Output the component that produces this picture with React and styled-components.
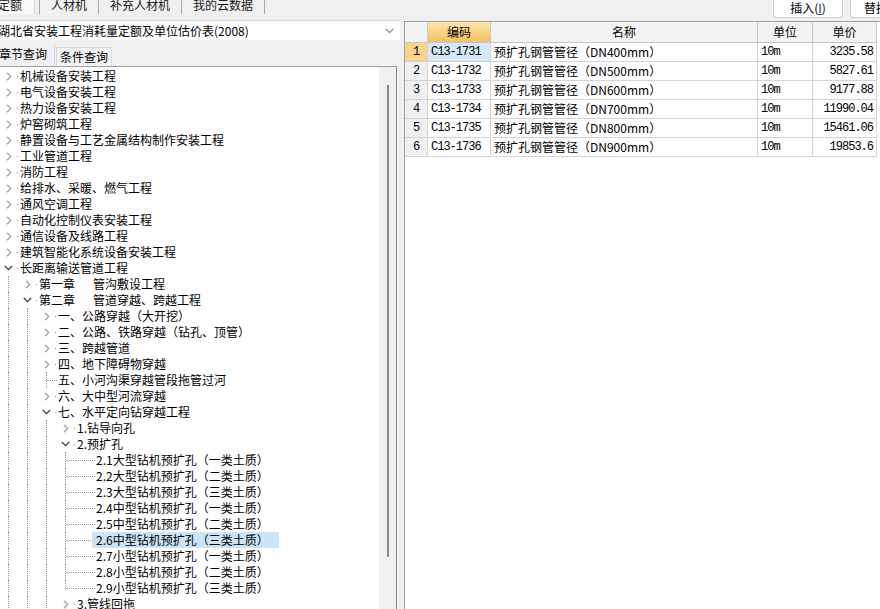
import React from 'react'
import styled, { createGlobalStyle } from 'styled-components'

const GlobalStyle = createGlobalStyle`
  html, body { margin: 0; padding: 0; background: #f0f0f0; overflow: hidden; }
  body {
    font-family: "Noto Sans CJK SC", "Liberation Sans", sans-serif;
    font-size: 12px;
    color: #000;
  }
`

const Page = styled.div`
  display: flex;
  width: 880px;
  height: 609px;
  overflow: hidden;
  background: #f0f0f0;
`

// ---------- left side ----------
const LeftPanel = styled.div`
  width: 403px;
  margin-left: -3px;
  flex-shrink: 0;
  display: flex;
  flex-direction: column;
  min-height: 0;
`

const TopTabs = styled.div`
  display: flex;
  height: 17px;
  margin-top: -3px;
  flex-shrink: 0;
`

const TopTab = styled.div`
  height: 17px;
  line-height: 16px;
  white-space: nowrap;
  padding: ${p => (p.$active ? '0 12px 0 1px' : '0 10px 0 11px')};
  background: ${p => (p.$active ? '#fafafa' : 'transparent')};
  border-right: 1px solid ${p => (p.$active ? '#d2d2d2' : 'transparent')};
  color: #1a1a1a;
`

const Sep = styled.div`
  width: 1px;
  height: 17px;
  background: #a8a8a8;
  margin-left: ${p => p.$gap || 0}px;
`

const Combo = styled.div`
  margin-top: 6px;
  height: 19px;
  border-top: 1px solid #dadada;
  background: #fff;
  display: flex;
  align-items: center;
  flex-shrink: 0;
`

const ComboText = styled.span`
  padding-left: 1px;
  line-height: 19px;
  white-space: nowrap;
`

const ComboArrow = styled.span`
  margin-left: auto;
  margin-right: 6px;
  display: flex;
`

const QueryTabs = styled.div`
  height: 26px;
  display: flex;
  align-items: flex-end;
  flex-shrink: 0;
`

const QueryTab = styled.div`
  box-sizing: border-box;
  height: ${p => (p.$active ? 23 : 19)}px;
  line-height: ${p => (p.$active ? 20 : 18)}px;
  padding: ${p => (p.$active ? '0 7px 0 1px' : '0 3px')};
  margin-left: ${p => (p.$active ? 0 : 1)}px;
  border: 1px solid ${p => (p.$active ? 'transparent' : '#d8d8d8')};
  border-right-color: #d8d8d8;
  border-bottom: none;
  background: ${p => (p.$active ? '#f0f0f0' : '#f3f3f3')};
  white-space: nowrap;
`

const TreeFrame = styled.div`
  flex: 1;
  min-height: 0;
  margin-right: 3px;
  display: flex;
  border-top: 1px solid #a0a0a0;
  border-right: 1px solid #828790;
  box-shadow: inset 0 1px 0 #c8c8c8;
  background: #fff;
`

const TreeBody = styled.div`
  flex: 1;
  min-width: 0;
  overflow: hidden;
  padding: 1px 0 0 3px;
  background: #fff;
`

const Scrollbar = styled.div`
  width: 17px;
  flex-shrink: 0;
  background: #f0f0f0;
  display: flex;
  justify-content: center;
  padding-top: 18px;
`

const Thumb = styled.div`
  width: 2px;
  height: 472px;
  background: #8a8a8a;
`

const Row = styled.div`
  display: flex;
  height: 16px;
  line-height: 16px;
  white-space: nowrap;
`

const Indent = styled.span`
  width: 19px;
  flex-shrink: 0;
  display: flex;
`

const Guide = styled.span`
  margin-left: 8px;
  width: 0;
  height: ${p => (p.$half ? '8px' : '100%')};
  border-left: 1px dotted #999;
  align-self: flex-start;
  flex-shrink: 0;
`

const HLine = styled.span`
  flex: 1;
  height: 0;
  align-self: center;
  border-top: 1px dotted #999;
  margin-right: ${p => p.$gap || 0}px;
`

const Toggle = styled.span`
  width: 20px;
  flex-shrink: 0;
  display: flex;
  align-items: center;
`

const ArrowBox = styled.span`
  width: 17px;
  display: flex;
  justify-content: center;
  align-items: center;
`

const Dot = styled.span`
  width: 1px;
  height: 1px;
  background: #9a9a9a;
`

const Label = styled.span`
  padding: ${p => (p.$sel ? '0 10px 0 4px' : '0')};
  margin-left: ${p => (p.$sel ? -4 : 0)}px;
  background: ${p => (p.$sel ? '#cce4f7' : 'transparent')};
`

const RightArrow = () => (
  <svg width="6" height="9" viewBox="0 0 6 9">
    <path d="M1 0.8 L4.6 4.5 L1 8.2" fill="none" stroke="#a2a2a2" strokeWidth="1.3" />
  </svg>
)

const DownArrow = () => (
  <svg width="9" height="6" viewBox="0 0 9 6">
    <path d="M0.8 1 L4.5 4.6 L8.2 1" fill="none" stroke="#3c3c3c" strokeWidth="1.3" />
  </svg>
)

// ---------- right side ----------
const Splitter = styled.div`
  width: 4px;
  flex-shrink: 0;
`

const RightPanel = styled.div`
  flex: 1;
  min-width: 0;
  display: flex;
  flex-direction: column;
  overflow: hidden;
`

const ActionBar = styled.div`
  height: 21px;
  flex-shrink: 0;
  display: flex;
  justify-content: flex-end;
  align-items: flex-start;
  margin-right: -35px;
  gap: 7px;
`

const ActionButton = styled.div`
  box-sizing: border-box;
  width: ${p => p.$w}px;
  height: 19px;
  margin-top: -1px;
  line-height: 18px;
  padding-left: ${p => p.$pl || 0}px;
  text-align: ${p => (p.$pl ? 'left' : 'center')};
  background: #fdfdfd;
  border: 1px solid #d0d0d0;
  border-top: none;
  border-radius: 0 0 4px 4px;
  white-space: nowrap;
  u { color: #1e2f70; }
`

const Grid = styled.div`
  flex: 1;
  background: #fff;
  border-top: 1px solid #a0a0a0;
  border-left: 1px solid #a0a0a0;
`

const GridRow = styled.div`
  display: flex;
  height: ${p => (p.$head ? 21 : 19)}px;
  line-height: ${p => (p.$head ? 20 : 18)}px;
`

const Cell = styled.div`
  width: ${p => p.$w}px;
  flex-shrink: 0;
  box-sizing: border-box;
  padding: 0 3px;
  white-space: nowrap;
  overflow: hidden;
  border-right: 1px solid ${p => (p.$head ? '#c9c9c9' : '#d4d4d4')};
  border-bottom: 1px solid ${p => (p.$head ? '#c4c4c4' : '#d4d4d4')};
  text-align: ${p => p.$align || 'left'};
  background: ${p => p.$bg || '#fff'};
  font-family: ${p => (p.$mono ? '"Liberation Mono", "Noto Sans CJK SC", monospace' : '"Noto Sans CJK SC", sans-serif')};
  letter-spacing: ${p => (p.$mono ? '-1px' : '0')};
`

const cols = [23, 63, 267, 55, 64]

const tree = [
  ...[
    '机械设备安装工程',
    '电气设备安装工程',
    '热力设备安装工程',
    '炉窖砌筑工程',
    '静置设备与工艺金属结构制作安装工程',
    '工业管道工程',
    '消防工程',
    '给排水、采暖、燃气工程',
    '通风空调工程',
    '自动化控制仪表安装工程',
    '通信设备及线路工程',
    '建筑智能化系统设备安装工程',
  ].map(t => ({ t, lv: 0, st: 'c', g: 0 })),
  { t: '长距离输送管道工程', lv: 0, st: 'e', g: 0 },
  { t: '第一章\u3000\u2002管沟敷设工程', lv: 1, st: 'c', g: 1 },
  { t: '第二章\u3000\u2002管道穿越、跨越工程', lv: 1, st: 'e', g: 1 },
  { t: '一、公路穿越（大开挖）', lv: 2, st: 'c', g: 2 },
  { t: '二、公路、铁路穿越（钻孔、顶管）', lv: 2, st: 'c', g: 2 },
  { t: '三、跨越管道', lv: 2, st: 'c', g: 2 },
  { t: '四、地下障碍物穿越', lv: 2, st: 'c', g: 2 },
  { t: '五、小河沟渠穿越管段拖管过河', lv: 2, st: 'leaf', g: 2 },
  { t: '六、大中型河流穿越', lv: 2, st: 'c', g: 2 },
  { t: '七、水平定向钻穿越工程', lv: 2, st: 'e', g: 2 },
  { t: '1.钻导向孔', lv: 3, st: 'c', g: 3 },
  { t: '2.预扩孔', lv: 3, st: 'e', g: 3 },
  ...[
    '2.1大型钻机预扩孔（一类土质）',
    '2.2大型钻机预扩孔（二类土质）',
    '2.3大型钻机预扩孔（三类土质）',
    '2.4中型钻机预扩孔（一类土质）',
    '2.5中型钻机预扩孔（二类土质）',
    '2.6中型钻机预扩孔（三类土质）',
    '2.7小型钻机预扩孔（一类土质）',
    '2.8小型钻机预扩孔（二类土质）',
    '2.9小型钻机预扩孔（三类土质）',
  ].map((t, i) => ({ t, lv: 4, st: 'branch', g: 4, last: i === 8, sel: i === 5 })),
  { t: '3.管线回拖', lv: 3, st: 'c', g: 3 },
]

const rows = [
  ['C13-1731', '预扩孔钢管管径（DN400mm）', '10m', '3235.58'],
  ['C13-1732', '预扩孔钢管管径（DN500mm）', '10m', '5827.61'],
  ['C13-1733', '预扩孔钢管管径（DN600mm）', '10m', '9177.88'],
  ['C13-1734', '预扩孔钢管管径（DN700mm）', '10m', '11990.04'],
  ['C13-1735', '预扩孔钢管管径（DN800mm）', '10m', '15461.06'],
  ['C13-1736', '预扩孔钢管管径（DN900mm）', '10m', '19853.6'],
]

function TreeRow({ node }) {
  const { t, lv, st, g, last, sel } = node
  return (
    <Row>
      {Array.from({ length: lv }).map((_, i) => {
        const conn = st === 'branch' && i === lv - 1
        return (
          <Indent key={i}>
            {i < g && <Guide $half={conn && last} />}
            {conn && <HLine />}
          </Indent>
        )
      })}
      <Toggle>
        {st === 'c' && (
          <>
            <ArrowBox><RightArrow /></ArrowBox>
            <Dot />
          </>
        )}
        {st === 'e' && (
          <>
            <ArrowBox><DownArrow /></ArrowBox>
            <Dot />
          </>
        )}
        {st === 'leaf' && (
          <>
            <Guide />
            <HLine $gap={1} />
          </>
        )}
        {st === 'branch' && <HLine $gap={1} />}
      </Toggle>
      <Label $sel={sel}>{t}</Label>
    </Row>
  )
}

export default function App() {
  return (
    <Page>
      <GlobalStyle />
      <LeftPanel>
        <TopTabs>
          <TopTab $active>定额</TopTab>
          <Sep $gap={4} />
          <TopTab>人材机</TopTab>
          <Sep />
          <TopTab>补充人材机</TopTab>
          <Sep />
          <TopTab>我的云数据</TopTab>
          <Sep />
        </TopTabs>
        <Combo>
          <ComboText>湖北省安装工程消耗量定额及单位估价表(2008)</ComboText>
          <ComboArrow>
            <svg width="9" height="6" viewBox="0 0 9 6">
              <path d="M0.8 1 L4.5 4.6 L8.2 1" fill="none" stroke="#858585" strokeWidth="1.1" />
            </svg>
          </ComboArrow>
        </Combo>
        <QueryTabs>
          <QueryTab $active>章节查询</QueryTab>
          <QueryTab>条件查询</QueryTab>
        </QueryTabs>
        <TreeFrame>
          <TreeBody>
            {tree.map((n, i) => (
              <TreeRow key={i} node={n} />
            ))}
          </TreeBody>
          <Scrollbar>
            <Thumb />
          </Scrollbar>
        </TreeFrame>
      </LeftPanel>
      <Splitter />
      <RightPanel>
        <ActionBar>
          <ActionButton $w={70}>插入(<u>I</u>)</ActionButton>
          <ActionButton $w={65} $pl={13}>替换(R)</ActionButton>
        </ActionBar>
        <Grid>
          <GridRow $head>
            <Cell $head $w={cols[0]} $bg="#f3f3f3" />
            <Cell $head $w={cols[1]} $align="center" $bg="linear-gradient(#fce6ae, #f4c062)">编码</Cell>
            <Cell $head $w={cols[2]} $align="center" $bg="#f3f3f3">名称</Cell>
            <Cell $head $w={cols[3]} $align="center" $bg="#f3f3f3">单位</Cell>
            <Cell $head $w={cols[4]} $align="center" $bg="#f3f3f3">单价</Cell>
          </GridRow>
          {rows.map((r, i) => (
            <GridRow key={r[0]}>
              <Cell $w={cols[0]} $align="center" $bg={i === 0 ? '#fbd48c' : '#f0f0f0'} $mono>
                {i + 1}
              </Cell>
              <Cell $w={cols[1]} $mono $bg={i === 0 ? '#d7e8f8' : '#fff'}>{r[0]}</Cell>
              <Cell $w={cols[2]}>{r[1]}</Cell>
              <Cell $w={cols[3]} $mono>{r[2]}</Cell>
              <Cell $w={cols[4]} $mono $align="right">{r[3]}</Cell>
            </GridRow>
          ))}
        </Grid>
      </RightPanel>
    </Page>
  )
}
